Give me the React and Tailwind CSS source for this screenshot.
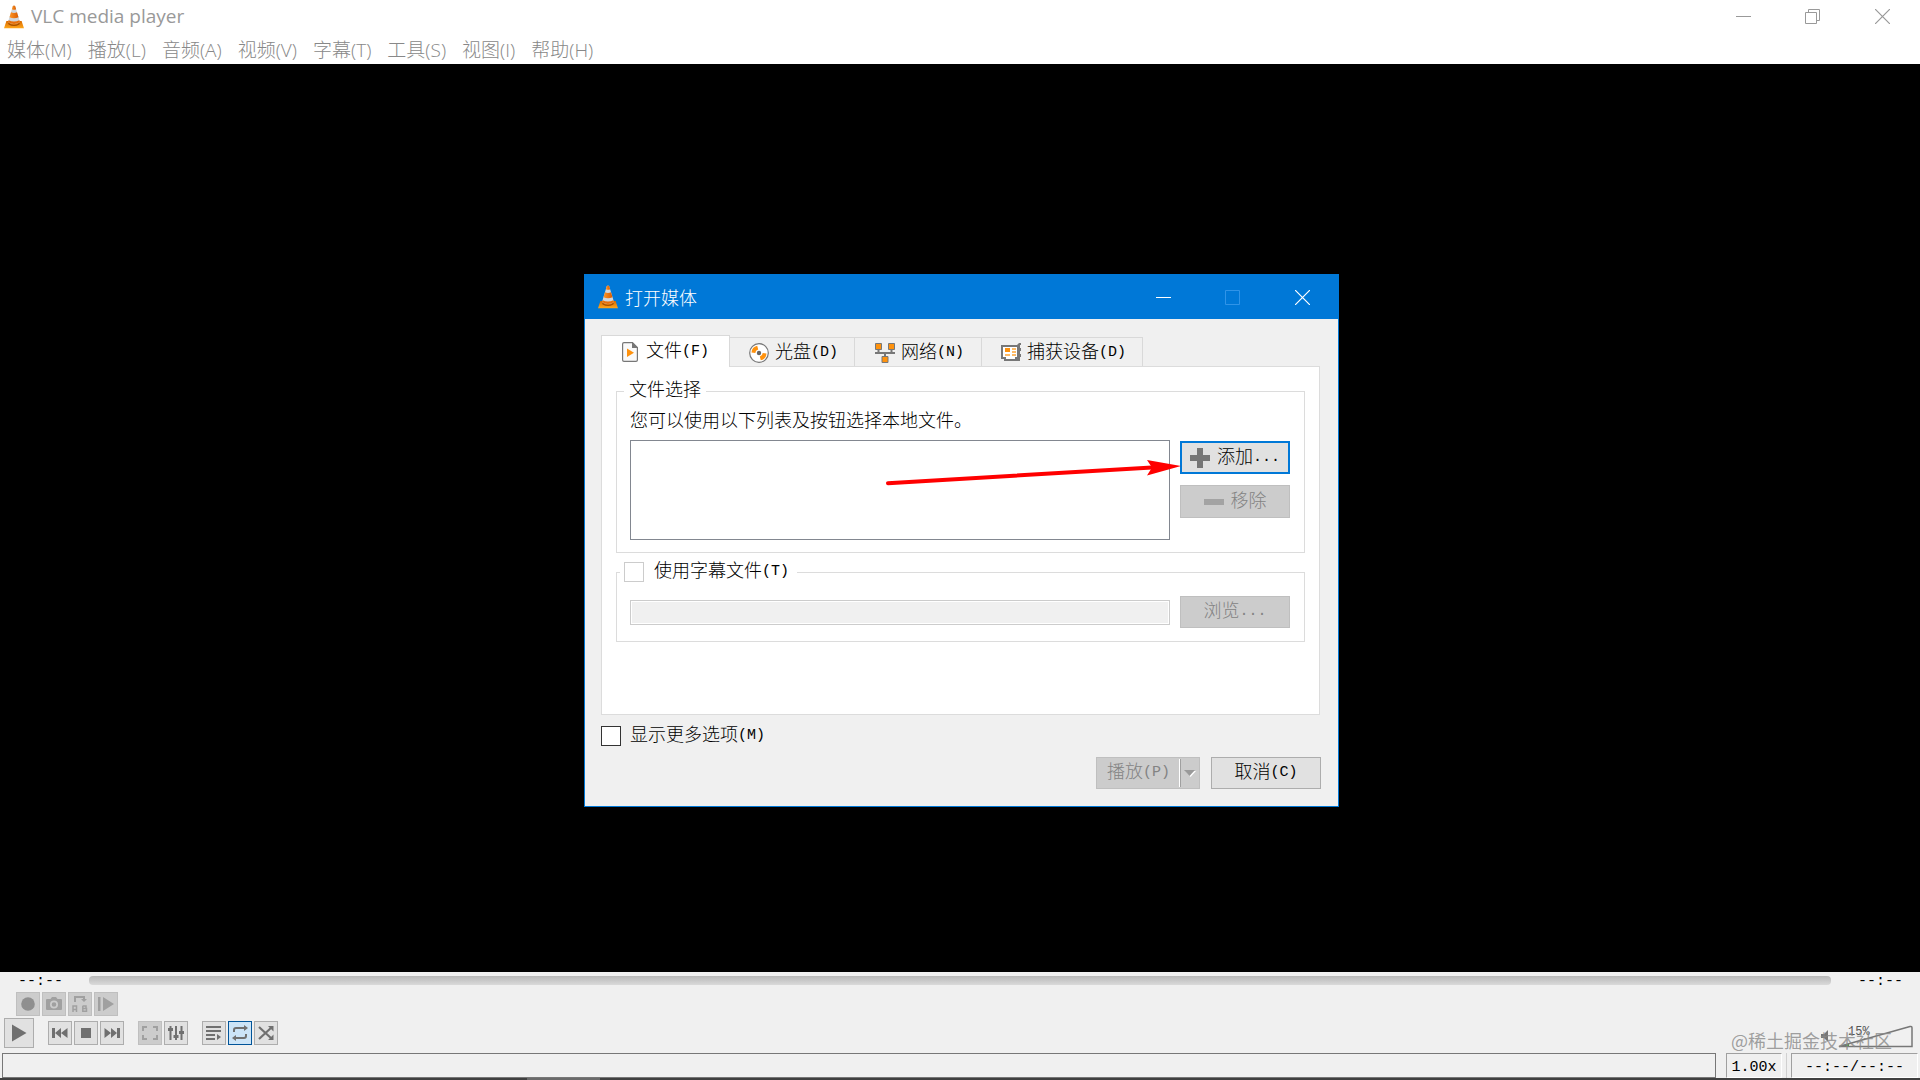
const menus = [
  ["媒体", "M"],
  ["播放", "L"],
  ["音频", "A"],
  ["视频", "V"],
  ["字幕", "T"],
  ["工具", "S"],
  ["视图", "I"],
  ["帮助", "H"],
];

const tabs = [
  { name: "光盘", hotkey: "D", icon: <DiscIcon />, width: "w-[125px]" },
  { name: "网络", hotkey: "N", icon: <NetworkIcon />, width: "w-[127px]" },
  { name: "捕获设备", hotkey: "D", icon: <CaptureIcon />, width: "w-[161px]" },
];

function Cone({ className }) {
  return (
    <svg viewBox="0 0 20 24" className={className} aria-hidden="true">
      <defs>
        <linearGradient id="coneBase" x1="0" y1="0" x2="0" y2="1">
          <stop offset="0" stopColor="#d96a00" />
          <stop offset="1" stopColor="#ffa81c" />
        </linearGradient>
        <linearGradient id="coneBody" x1="0" y1="0" x2="1" y2="0">
          <stop offset="0" stopColor="#ff9526" />
          <stop offset="1" stopColor="#d85c00" />
        </linearGradient>
      </defs>
      <path d="M2.4 16h15.2L20 23.3H0z" fill="url(#coneBase)" />
      <path d="M4 17.4q6 4.6 12 0l-.6 2.2q-5.400 3-10.800 0z" fill="#a84f00" />
      <path d="M8.700 1.500q1.300-2 2.600 0L16 17q-6 4-12 0z" fill="#cfd6dd" />
      <path d="M8.700 1.500q1.300-2 2.600 0l.8 2.800q-2 1-4.200 0z" fill="url(#coneBody)" />
      <path d="M7 7.300q3 1.400 6 0l1.500 4.900q-4.500 2.100-9 0z" fill="url(#coneBody)" />
      <path d="M4.600 15.200q5.400 2.800 10.800 0L16 17q-6 4-12 0z" fill="#e8700a" />
    </svg>
  );
}

function FileIcon() {
  return (
    <svg width="16" height="20" viewBox="0 0 16 20" aria-hidden="true">
      <path d="M2 .6h8.500L15.400 5.500V18q0 1.400-1.400 1.400H2Q.6 19.400.6 18V2Q.6.6 2 .6z" fill="#fafafa" stroke="#777" strokeWidth="1.200" />
      <path d="M10 0l6 6h-6z" fill="#777" />
      <path d="M5 6.500v8.500l7-4.200z" fill="#ff920d" />
    </svg>
  );
}

function DiscIcon() {
  return (
    <svg width="20" height="20" viewBox="0 0 20 20" aria-hidden="true">
      <circle cx="10" cy="10" r="9.300" fill="#fff" stroke="#777" strokeWidth="1.200" />
      <path d="M2.500 9.500A7.500 7.500 0 0 1 8.200 2.700L9.200 6.500A3.800 3.800 0 0 0 6.300 10z" fill="#ff920d" />
      <path d="M17.500 10.500A7.500 7.500 0 0 1 11.800 17.300L10.800 13.500A3.800 3.800 0 0 0 13.700 10z" fill="#ff920d" />
      <circle cx="10" cy="10" r="2.200" fill="#666" />
    </svg>
  );
}

function NetworkIcon() {
  return (
    <svg width="20" height="20" viewBox="0 0 20 20" aria-hidden="true">
      <path d="M0 10h20M3.500 6v4M16.500 6v4M10 9v5" stroke="#777" strokeWidth="2" />
      <g fill="#ff920d" stroke="#777">
        <path d="M.5.500h6v6h-6zM13.500.500h6v6h-6zM7 13.500h6v6H7z" />
      </g>
    </svg>
  );
}

function CaptureIcon() {
  return (
    <svg width="20" height="19" viewBox="0 0 20 19" aria-hidden="true">
      <path d="M1 3h16V15h-2v2H4v-2H1z" fill="#fff" stroke="#777" strokeWidth="2" />
      <path d="M16 2l2-2h2v2h-1v3h1v3h-1v3h1v3h-1v4h-3z" fill="#777" />
      <path d="M4 5h5v4H4z" fill="#ff920d" />
      <path d="M11 6h4M11 9h4M4 12h5M11 12h4" stroke="#ffa535" strokeWidth="1.600" />
    </svg>
  );
}

// localized caption with its hotkey in half-width letters
function Caption({ text, hotkey }) {
  return (
    <span className="flex items-center whitespace-nowrap">
      {text}
      {hotkey && (
        <span className="font-['Liberation_Mono',monospace] text-[15px]">{hotkey}</span>
      )}
    </span>
  );
}

function WindowButtons({ restore }) {
  return (
    <>
      <button type="button" aria-label="最小化" className="grid w-[69px] place-items-center">
        <svg width="15" height="15" viewBox="0 0 15 15" stroke="currentColor">
          <path d="M0 7.500h15" />
        </svg>
      </button>
      <button type="button" aria-label="最大化" disabled={!restore} className="grid w-[69px] place-items-center disabled:text-[#3094e8]">
        <svg width="15" height="15" viewBox="0 0 15 15" fill="none" stroke="currentColor">
          {restore ? <path d="M.5 3.500h11v11H.5zM3.500 3V.5h11v11H12" /> : <path d="M.5.500h14v14H.5z" />}
        </svg>
      </button>
      <button type="button" aria-label="关闭" className="grid w-[71px] place-items-center">
        <svg width="15" height="15" viewBox="0 0 15 15" stroke="currentColor" strokeWidth="1.200">
          <path d="M0 0l15 15M15 0L0 15" />
        </svg>
      </button>
    </>
  );
}

function ToolButton({ label, disabled, active, big, children }) {
  return (
    <button
      type="button"
      aria-label={label}
      disabled={disabled}
      className={`grid place-items-center border ${big ? "size-[30px]" : "size-6"} ${
        active
          ? "border-[#005499] bg-[#cce4f7] text-[#707070]"
          : "border-[#adadad] bg-[#e1e1e1] text-[#707070] disabled:border-[#bfbfbf] disabled:bg-[#ccc] disabled:text-[#a0a0a0]"
      }`}
    >
      <svg className={big ? "size-5" : "size-4"} viewBox={big ? "0 0 20 20" : "0 0 16 16"} fill="currentColor">
        {children}
      </svg>
    </button>
  );
}

function OpenDialog() {
  return (
    <section
      role="dialog"
      aria-labelledby="dialogTitle"
      className="w-[755px] border border-[#0078d7] bg-[#f0f0f0] font-['Liberation_Mono','Noto_Sans_CJK_SC',monospace] text-lg leading-6 font-light text-black"
    >
      <header className="flex h-11 items-stretch bg-[#0078d7] text-white">
        <div className="flex flex-1 items-center gap-[7px] pl-[13px]">
          <Cone className="h-6 w-5" />
          <h1 id="dialogTitle" className="font-['Noto_Sans_CJK_SC',sans-serif] text-lg leading-6 font-light">打开媒体</h1>
        </div>
        <WindowButtons />
      </header>

      <div className="pt-4 pr-[17px] pb-[17px] pl-4">
        <div role="tablist" className="flex items-end">
          <button type="button" role="tab" aria-selected="true" className="z-10 -mb-px flex h-8 w-[129px] items-center justify-center gap-2 border border-b-0 border-[#d9d9d9] bg-white">
            <FileIcon />
            <Caption text="文件" hotkey="(F)" />
          </button>
          {tabs.map((tab) => (
            <button
              key={tab.name}
              type="button"
              role="tab"
              aria-selected="false"
              className={`${tab.width} flex h-[29px] items-center justify-center gap-[6px] border-t border-r border-[#d9d9d9] pt-px pl-[3px]`}
            >
              {tab.icon}
              <Caption text={tab.name} hotkey={`(${tab.hotkey})`} />
            </button>
          ))}
        </div>

        <div role="tabpanel" className="mr-px border border-[#dcdcdc] bg-white px-[14px] pt-3 pb-[72px]">
          <fieldset className="border border-[#dcdcdc] pr-[14px] pb-3 pl-[13px]">
            <legend className="-ml-[6px] px-[5px]">文件选择</legend>
            <p className="pt-[7px] pb-[6px]">您可以使用以下列表及按钮选择本地文件。</p>
            <div className="flex gap-[10px]">
              <textarea readOnly aria-label="文件列表" className="h-[100px] flex-1 resize-none border border-[#828790] bg-white" />
              <div className="flex w-[110px] flex-col gap-[11px] pt-px">
                <button type="button" className="flex h-[33px] items-center justify-center gap-[7px] border-2 border-[#0078d7] bg-[#e1e1e1]">
                  <svg width="20" height="20" viewBox="0 0 20 20" fill="#777"><path d="M7 0h6v7h7v6h-7v7H7v-7H0V7h7z" /></svg>
                  <Caption text="添加" hotkey="..." />
                </button>
                <button type="button" disabled className="flex h-[33px] items-center justify-center gap-[7px] border border-[#bfbfbf] bg-[#ccc] text-[#838383]">
                  <svg width="20" height="6" viewBox="0 0 20 6" fill="#a3a3a3"><path d="M0 0h20v6H0z" /></svg>
                  移除
                </button>
              </div>
            </div>
          </fieldset>

          <fieldset className="mt-[7px] border border-[#dcdcdc] pr-[14px] pb-[13px] pl-[13px]">
            <legend className="-ml-[10px] pr-2 pl-1">
              <label className="flex items-center gap-[10px]">
                <input type="checkbox" className="size-5 appearance-none border border-[#ccc] bg-white" />
                <Caption text="使用字幕文件" hotkey="(T)" />
              </label>
            </legend>
            <div className="flex items-center gap-[10px] pt-3">
              <input type="text" disabled aria-label="字幕文件" className="h-[25px] min-w-0 flex-1 border border-[#ccc] bg-[#f0f0f0] ring-1 ring-white ring-inset" />
              <button type="button" disabled className="flex h-8 w-[110px] items-center justify-center border border-[#bfbfbf] bg-[#ccc] text-[#838383]">
                <Caption text="浏览" hotkey="..." />
              </button>
            </div>
          </fieldset>
        </div>

        <label className="mt-[9px] flex items-center gap-[9px]">
          <input type="checkbox" className="size-5 appearance-none border border-[#333] bg-white" />
          <Caption text="显示更多选项" hotkey="(M)" />
        </label>

        <div className="mt-[9px] flex justify-end gap-[11px]">
          <div className="flex h-8 border border-[#bfbfbf] bg-[#ccc] text-[#838383]">
            <button type="button" disabled className="w-[83px]">
              <span className="flex justify-center"><Caption text="播放" hotkey="(P)" /></span>
            </button>
            <button type="button" disabled aria-label="更多播放方式" className="my-px grid w-[19px] place-items-center border-l border-[#a0a0a0] shadow-[-1px_0_0_white]">
              <svg width="12" height="7" viewBox="0 0 12 7">
                <path d="M1 1h11L6.500 7z" fill="#fff" />
                <path d="M0 0h11L5.500 6z" fill="#999" />
              </svg>
            </button>
          </div>
          <button type="button" className="flex h-8 w-[110px] items-center justify-center border border-[#adadad] bg-[#e1e1e1]">
            <Caption text="取消" hotkey="(C)" />
          </button>
        </div>
      </div>
    </section>
  );
}

function Controls() {
  return (
    <footer className="bg-[#f0f0f0] font-['Liberation_Mono',monospace] text-[15px] text-black">
      <div className="flex h-5 items-start pr-4 pl-[18px]">
        <span className="w-[71px] leading-5">--:--</span>
        <input type="range" disabled aria-label="播放进度" className="mt-1 h-[9px] flex-1 appearance-none rounded bg-linear-to-b from-[#b8b8b8] to-[#dadada] [&::-webkit-slider-thumb]:opacity-0" />
        <span className="w-[73px] pl-[27px] leading-5">--:--</span>
      </div>

      <div className="flex gap-[2px] pl-4">
        <ToolButton label="录制" disabled>
          <circle cx="8" cy="8" r="6.800" fill="#8f8f8f" />
        </ToolButton>
        <ToolButton label="截图" disabled>
          <path fillRule="evenodd" d="M1 3h3.500L6 1h4l1.500 2H15q1 0 1 1v9q0 1-1 1H1q-1 0-1-1V4q0-1 1-1zM8 4.500a4 4 0 1 0 0 8 4 4 0 0 0 0-8zM8 6.200a2.300 2.300 0 1 1 0 4.600 2.300 2.300 0 0 1 0-4.600z" />
        </ToolButton>
        <ToolButton label="A-B 循环" disabled>
          <path d="M2 6V0h11v3h2l-3 3-3-3h2V2H4v4z" />
          <path d="M1 16v-6h3.500v6M1 13.500h3.500M10.800 9.800v5.400h3.700v-2.700h-3.700M10.800 10h3.200v2.500" fill="none" stroke="currentColor" strokeWidth="1.500" />
        </ToolButton>
        <ToolButton label="逐帧" disabled>
          <path d="M0 1h2.500v14H0zM5 1l11 7-11 7z" />
        </ToolButton>
      </div>

      <div className="flex items-center pt-[2px] pb-[5px] pl-1">
        <ToolButton label="播放" big>
          <path d="M3 1.500l14.500 8.500L3 18.500z" />
        </ToolButton>
        <div className="ml-[14px] flex gap-[2px]">
          <ToolButton label="上一个">
            <path d="M0 3h3v10H0zM3 8l6-5v10zM9 8l6.500-5v10z" />
          </ToolButton>
          <ToolButton label="停止">
            <path d="M3 3h10v10H3z" />
          </ToolButton>
          <ToolButton label="下一个">
            <path d="M13 3h3v10h-3zM13 8L7 3v10zM7 8L.5 3v10z" />
          </ToolButton>
        </div>
        <div className="ml-[14px] flex gap-[2px]">
          <ToolButton label="全屏" disabled>
            <path d="M0 1h5v2H2v3H0zM16 1h-5v2h3v3h2zM0 15h5v-2H2v-3H0zM16 15h-5v-2h3v-3h2z" />
          </ToolButton>
          <ToolButton label="扩展设置">
            <path d="M1.500 1h2v14h-2zM7 1h2v14H7zM12.500 1h2v14h-2zM0 3h5v3H0zM5.500 10h5v3h-5zM11 6h5v3h-5z" />
          </ToolButton>
        </div>
        <div className="ml-[14px] flex gap-[2px]">
          <ToolButton label="播放列表">
            <path d="M0 1h15v2H0zM0 5h15v2H0zM0 9h9v2H0zM0 13h9v2H0zM11 9l4 3-4 3z" />
          </ToolButton>
          <ToolButton label="循环" active>
            <path d="M1 7V5q0-3 3-3h8V0l4 3-4 3V4H4q-1 0-1 1v2zM15 9v2q0 3-3 3H4v2l-4-3 4-3v2h8q1 0 1-1V9z" />
          </ToolButton>
          <ToolButton label="随机">
            <path d="M1 2l13 12M1 14L14 2" fill="none" stroke="currentColor" strokeWidth="2.200" />
            <path d="M10 1h5.500v5.500zM10 15h5.500V9.500z" />
          </ToolButton>
        </div>
        <div className="relative mr-[6px] ml-auto flex h-[30px] items-end">
          <svg width="96" height="24" viewBox="0 0 96 24" aria-hidden="true">
            <path d="M3 10h3l4-4v12l-4-4H3z" fill="#777" />
            <path d="M21 22.500L31 19.500v3z" fill="#37a33c" />
            <path d="M21 22.500L92 2.500q2-.5 2 1.500v18.500z" fill="none" stroke="#777" strokeWidth="1.500" />
          </svg>
          <span className="absolute top-2 left-[30px] text-xs leading-3 text-[#555]">15%</span>
          <span className="absolute right-[22px] -bottom-1 font-['Noto_Sans_CJK_SC',sans-serif] text-lg leading-6 whitespace-nowrap text-[#888]/80">@稀土掘金技术社区</span>
        </div>
      </div>

      <div className="flex h-[25px] items-stretch px-[2px]">
        <div className="flex-1 border border-[#777]" />
        <div className="ml-[10px] grid w-14 place-items-center border border-[#a0a0a0] border-r-white border-b-white pt-[3px]">1.00x</div>
        <div className="mx-1 w-px bg-[#d0d0d0]" />
        <div className="grid w-[127px] place-items-center border border-[#a0a0a0] border-r-white border-b-white pt-[3px]">--:--/--:--</div>
      </div>
      <div className="h-[2px] bg-[#404040] pl-[527px]">
        <div className="h-full w-[73px] bg-[#6a6a6a]" />
      </div>
    </footer>
  );
}

function App() {
  return (
    <div className="relative flex min-h-screen flex-col bg-black">
      <div className="bg-white font-['Open_Sans','Noto_Sans_CJK_SC',sans-serif] text-[#999]">
        <header className="flex h-[33px] items-stretch pr-[2px]">
          <div className="flex flex-1 items-center gap-[7px] pl-1">
            <Cone className="h-6 w-5" />
            <span className="text-[19px]">VLC media player</span>
          </div>
          <WindowButtons restore />
        </header>
        <nav className="flex h-[31px] items-center gap-4 pt-[2px] pl-[7px] text-[19px] leading-7 font-light text-[#888]">
          {menus.map(([name, hotkey]) => (
            <button key={name} type="button" className="whitespace-nowrap">
              {name}({hotkey})
            </button>
          ))}
        </nav>
      </div>

      <main className="flex-1 bg-black" />
      <Controls />

      <div className="absolute inset-0 z-10 flex items-center justify-center pt-px pl-[3px]">
        <OpenDialog />
      </div>

      {/* pointer to the add button */}
      <div className="pointer-events-none absolute inset-0 z-20 flex items-center justify-center pt-px pl-[3px]">
        <svg width="755" height="533" viewBox="584 274 755 533" fill="red">
          <path d="M888 483.200L1152 467.500" stroke="red" strokeWidth="4" strokeLinecap="round" />
          <path d="M1147 460L1181 466L1147 475.500L1152 467.500z" />
        </svg>
      </div>
    </div>
  );
}

export default App;
